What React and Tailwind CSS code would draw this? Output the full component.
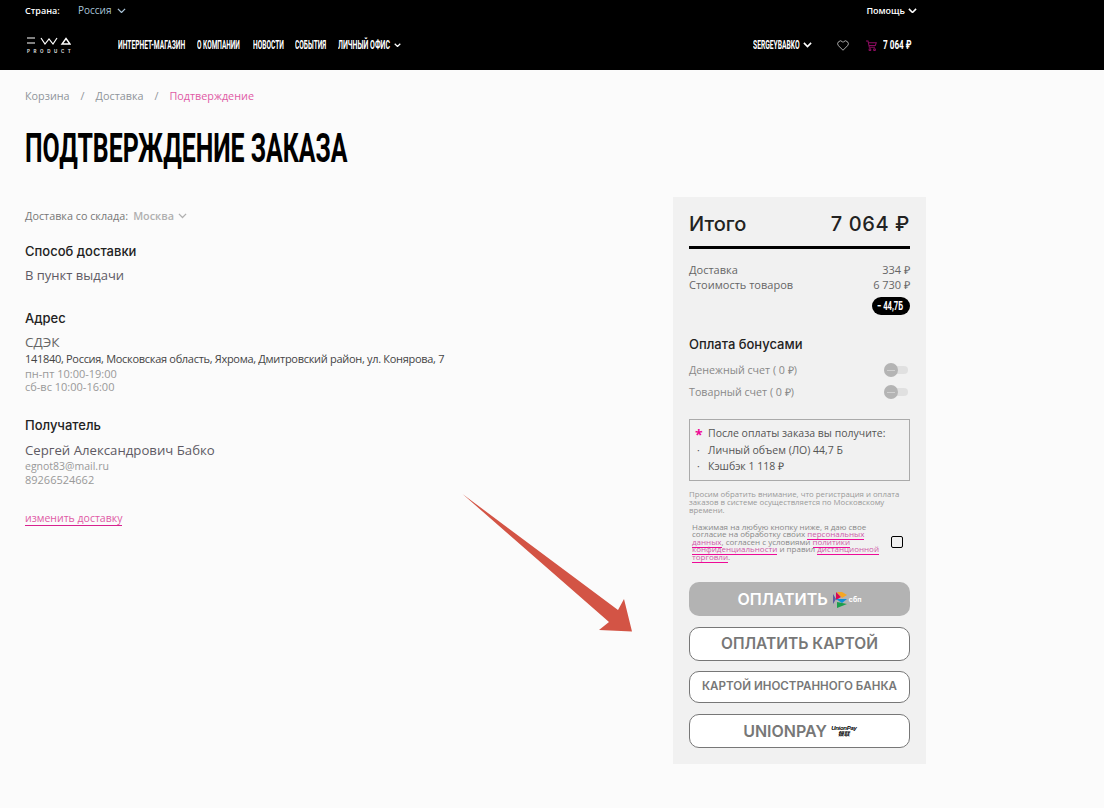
const body = "font-['Open_Sans',sans-serif]";
const head = "font-['Inter',sans-serif]";

function Narrow({ w, sx = "scale-x-[0.62]", className = "", children }) {
  return (
    <span className={`inline-block overflow-visible ${w} ${className}`}>
      <span className={`inline-block origin-left whitespace-nowrap font-['Roboto',sans-serif] font-bold ${sx}`}>{children}</span>
    </span>
  );
}

function Chev({ className = "", w = 9, sw = 1.4 }) {
  return (
    <svg width={w} height={w * 0.6} viewBox="0 0 10 6" fill="none" stroke="currentColor" strokeWidth={sw} className={className}>
      <path d="M1 1l4 4 4-4" />
    </svg>
  );
}

function Logo() {
  return (
    <div className="flex w-[44px] flex-col gap-[4px]">
      <svg width="44" height="11" viewBox="0 0 44 11" fill="none" stroke="#fff" strokeWidth="1.2">
        <path d="M0 4h8M0 9h8" />
        <path d="M14 4l4 6 4-5 4 5 4-6" />
        <path d="M39 4.5l4 5.5h-8z" strokeWidth="1.4" />
      </svg>
      <span className="text-[4.5px] font-['Inter',sans-serif] leading-[5px] font-bold tracking-[3.6px] text-[#ddd] whitespace-nowrap">PRODUCT</span>
    </div>
  );
}

function Toggle() {
  return (
    <div className="relative h-[8px] w-[24px] rounded-full bg-[#e0e0e0]">
      <div className="absolute left-0 top-[-3px] flex h-[14px] w-[14px] items-center justify-center rounded-full bg-[#b4b4b4]">
        <div className="h-px w-[8px] bg-[#d0d0d0]" />
      </div>
    </div>
  );
}

function Sbp() {
  return (
    <span className="flex items-center gap-[1px]">
      <svg width="15" height="17" viewBox="0 0 15 17">
        <path d="M0 3l3 5-3 5z" fill="#5b57a2" />
        <path d="M3 9l5-3-5-5z" fill="#d90751" />
        <path d="M4 1h5l5 3-5 3z" fill="#f5a623" />
        <path d="M3 8h11l-5 4z" fill="#0f8ed6" />
        <path d="M4 11l5 1 5 1-10 4z" fill="#1b9e4b" />
      </svg>
      <span className="text-[7px] font-['Inter',sans-serif] font-bold leading-none text-white">сбп</span>
    </span>
  );
}

function UnionPay() {
  return (
    <span className="flex w-[24px] flex-col items-center text-black">
      <span className="font-['Liberation_Sans',sans-serif] text-[6px] font-bold italic leading-[6px] tracking-[-0.3px]">UnionPay</span>
      <span className="font-['Noto_Sans_CJK_SC',sans-serif] text-[6px] font-bold italic leading-[6px]">银联</span>
    </span>
  );
}

function Under({ children }) {
  return <span className="border-b border-[#ee0a97] text-[#cf5ba8]">{children}</span>;
}

function PayBtn({ h, className = "", children }) {
  return (
    <div className={`flex w-full items-center justify-center rounded-[10px] ${h} ${className}`}>{children}</div>
  );
}

function Section({ title, className = "", children }) {
  return (
    <div className={className}>
      <div className={`${head} text-[13px] font-medium leading-[16px] text-[#222]`}>{title}</div>
      {children}
    </div>
  );
}

export default function App() {
  return (
    <div className={`relative h-[808px] w-[1104px] overflow-hidden bg-[#fbfbfb] ${body}`}>
      <header className="h-[70px] bg-black text-white">
        <div className="flex h-[21px] items-center justify-between pl-[25px] pr-[187px]">
          <div className="flex items-center text-[10px]">
            <span className="w-[53px] text-[9px] font-semibold">Страна:</span>
            <span className="text-[#a9c4d8]">Россия</span>
            <Chev className="ml-[5px] text-[#a9c4d8]" w={9} />
          </div>
          <div className="flex items-center gap-[3px] text-[9px] font-semibold">
            Помощь <Chev w={9} sw={1.7} />
          </div>
        </div>
        <div className="mt-[10px] flex h-[26px] items-center justify-between pl-[27px] pr-[192px]">
          <div className="flex items-center">
            <Logo />
            <nav className="ml-[47px] flex items-center pt-[2px] text-[12px] uppercase">
              <Narrow w="w-[68px]" sx="scale-x-[0.555]" className="mr-[11px]">Интернет-магазин</Narrow>
              <Narrow w="w-[45px]" sx="scale-x-[0.54]" className="mr-[11px]">О компании</Narrow>
              <Narrow w="w-[31px]" sx="scale-x-[0.55]" className="mr-[11px]">Новости</Narrow>
              <Narrow w="w-[33px]" sx="scale-x-[0.55]" className="mr-[10px]">События</Narrow>
              <Narrow w="w-[53px]" sx="scale-x-[0.58]" className="mr-[3px]">Личный офис</Narrow>
              <Chev w={7} sw={1.8} />
            </nav>
          </div>
          <div className="flex items-center pt-[2px]">
            <Narrow w="w-[47px]" sx="scale-x-[0.56]" className="text-[12px]">SERGEYBABKO</Narrow>
            <Chev className="ml-[3px]" w={9} sw={1.8} />
            <svg width="12" height="11" viewBox="0 0 24 22" fill="none" stroke="#bbb" strokeWidth="1.8" className="ml-[25px]">
              <path d="M12 20.5L3 11.5a5.6 5.6 0 018-8l1 1.1 1-1.1a5.6 5.6 0 018 8z" />
            </svg>
            <svg width="11" height="11" viewBox="0 0 12 12" fill="none" stroke="#8f0c62" strokeWidth="1.1" className="ml-[17px]">
              <path d="M0 1h2.2l1.4 7h6.2M2.8 3h8.4l-1 3H3.3" />
              <circle cx="4.3" cy="10.5" r="1" />
              <circle cx="9.3" cy="10.5" r="1" />
            </svg>
            <Narrow w="w-[29px]" sx="scale-x-[0.68]" className="ml-[6px] text-[12px]">7 064 ₽</Narrow>
          </div>
        </div>
      </header>

      <main className="flex items-start justify-between pl-[25px] pr-[178px]">
        <div className="w-[440px]">
          <div className="mt-[19px] flex h-[14px] items-center text-[10.8px] leading-[14px] text-[#8f949a]">
            <span>Корзина</span>
            <span className="mx-[11px]">/</span>
            <span>Доставка</span>
            <span className="mx-[11px]">/</span>
            <span className="text-[#e05aa5]">Подтверждение</span>
          </div>
          <h1 className="mt-[21px] h-[44px] text-[41px] leading-[44px] text-black">
            <Narrow w="w-[322px]" sx="scale-x-[0.606]">ПОДТВЕРЖДЕНИЕ ЗАКАЗА</Narrow>
          </h1>

          <div className="mt-[41px] flex h-[14px] items-center text-[10.8px] leading-[14px] text-[#777]">
            <span>Доставка со склада:</span>
            <span className="ml-[5px] font-semibold text-[#b0b0b0]">Москва</span>
            <Chev className="ml-[4px] text-[#b0b0b0]" w={9} />
          </div>

          <Section title="Способ доставки" className="mt-[20px]">
            <div className="mt-[8px] text-[13px] leading-[16px] text-[#5e5a64]">В пункт выдачи</div>
          </Section>

          <Section title="Адрес" className="mt-[27px]">
            <div className="mt-[8px] text-[13.5px] leading-[16px] text-[#666]">СДЭК</div>
            <div className="mt-[2px] whitespace-nowrap text-[11px] leading-[13px] tracking-[-0.3px] text-[#444]">141840, Россия, Московская область, Яхрома, Дмитровский район, ул. Конярова, 7</div>
            <div className="mt-[2px] text-[11px] leading-[13px] text-[#999]">пн-пт 10:00-19:00</div>
            <div className="text-[11px] leading-[13px] text-[#999]">сб-вс 10:00-16:00</div>
          </Section>

          <Section title="Получатель" className="mt-[24px]">
            <div className="mt-[9px] text-[13.2px] leading-[16px] text-[#5e5a64]">Сергей Александрович Бабко</div>
            <div className="mt-[2px] text-[10.5px] leading-[13px] text-[#999]">egnot83@mail.ru</div>
            <div className="text-[11px] leading-[13px] text-[#999]">89266524662</div>
          </Section>

          <div className="mt-[18px]">
            <span className="inline-block border-b border-[#d8218f] text-[10.5px] leading-[13px] text-[#e05aa5]">изменить доставку</span>
          </div>
        </div>

        <aside className="mt-[127px] h-[567px] w-[253px] bg-[#f1f1f1] px-[16px]">
          <div className={`${head} flex h-[42px] items-end justify-between pb-[2px] text-[20px] font-medium leading-[26px] text-[#222]`}>
            <span>Итого</span>
            <span className="tracking-[0.6px]">7 064 ₽</span>
          </div>
          <div className="mt-[7px] h-[3px] bg-black" />

          <div className="mt-[13px] flex justify-between text-[11px] leading-[15px] text-[#666]">
            <span>Доставка</span><span>334 ₽</span>
          </div>
          <div className="flex justify-between text-[11px] leading-[15px] text-[#666]">
            <span>Стоимость товаров</span><span>6 730 ₽</span>
          </div>
          <div className="mt-[5px] flex justify-end">
            <div className="flex h-[18px] w-[38px] items-center overflow-hidden rounded-full bg-black pl-[5px] text-[12px] text-white">
              <Narrow w="w-[30px]" sx="scale-x-[0.64]">− 44,7Б</Narrow>
            </div>
          </div>

          <div className={`${head} mt-[21px] text-[13px] font-medium leading-[16px] text-[#222]`}>Оплата бонусами</div>
          <div className="mt-[11px] flex h-[14px] items-center justify-between pr-[2px] text-[10.7px] text-[#888]">
            <span>Денежный счет ( 0 ₽)</span><Toggle />
          </div>
          <div className="mt-[8px] flex h-[14px] items-center justify-between pr-[2px] text-[10.7px] text-[#888]">
            <span>Товарный счет ( 0 ₽)</span><Toggle />
          </div>

          <div className="mt-[20px] h-[62px] border border-[#aaa] pl-[5px] pt-[5px] text-[10.5px] leading-[16.5px] text-[#555]">
            <div className="flex">
              <span className="w-[13px] pt-[3px] text-[14px] font-bold leading-[13px] text-[#ee0a97]">*</span>
              <span>После оплаты заказа вы получите:</span>
            </div>
            <div className="flex">
              <span className="w-[13px] pl-[2px]">·</span><span>Личный объем (ЛО) 44,7 Б</span>
            </div>
            <div className="flex">
              <span className="w-[13px] pl-[2px]">·</span><span>Кэшбэк 1 118 ₽</span>
            </div>
          </div>

          <p className="mt-[9px] text-[7.8px] leading-[8px] text-[#999]">
            Просим обратить внимание, что регистрация и оплата<br />
            заказов в системе осуществляется по Московскому<br />
            времени.
          </p>

          <div className="mt-[9px] flex items-center justify-between pl-[3px]">
            <p className="w-[196px] text-[8px] leading-[7.4px] text-[#888]">
              Нажимая на любую кнопку ниже, я даю свое<br />
              согласие на обработку своих <Under>персональных</Under><br />
              <Under>данных</Under>, согласен с условиями <Under>политики</Under><br />
              <Under>конфиденциальности</Under> и правил <Under>дистанционной</Under><br />
              <Under>торговли</Under>.
            </p>
            <div className="mr-[7px] h-[12px] w-[12px] rounded-[2px] border-[1.5px] border-black" />
          </div>

          <div className={`${head} mt-[22px] flex flex-col font-semibold`}>
            <PayBtn h="h-[34px]" className="gap-[5px] bg-[#b3b3b3] text-[16px] text-white">
              ОПЛАТИТЬ <Sbp />
            </PayBtn>
            <PayBtn h="h-[34px]" className="mt-[11px] border border-[#777] bg-white text-[15.5px] text-[#777]">ОПЛАТИТЬ КАРТОЙ</PayBtn>
            <PayBtn h="h-[32px]" className="mt-[10px] border border-[#777] bg-white text-[11.6px] text-[#777]">КАРТОЙ ИНОСТРАННОГО БАНКА</PayBtn>
            <PayBtn h="h-[34px]" className="mt-[11px] gap-[5px] border border-[#777] bg-white text-[16px] text-[#777]">
              UNIONPAY <UnionPay />
            </PayBtn>
          </div>
        </aside>
      </main>

      <svg className="absolute left-[450px] top-[485px]" width="200" height="150" viewBox="450 485 200 150">
        <path d="M462.5 494L618 610l6-11 8 32.5-33-1.5 10-8z" fill="#d35445" />
      </svg>
    </div>
  );
}
